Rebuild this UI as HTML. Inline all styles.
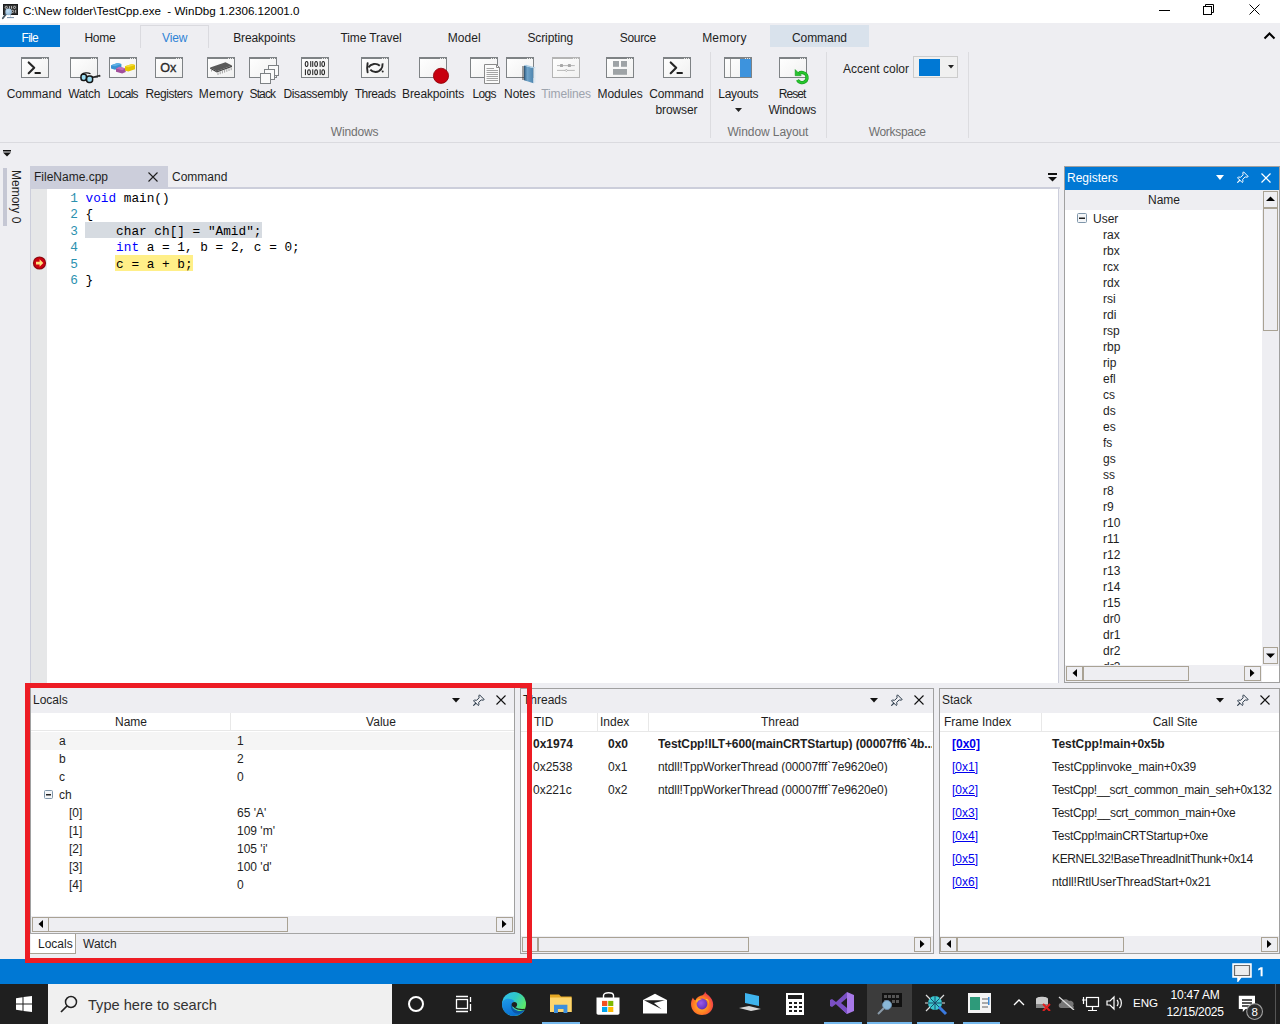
<!DOCTYPE html>
<html><head><meta charset="utf-8">
<style>
*{box-sizing:border-box;margin:0;padding:0}
html,body{width:1280px;height:1024px;overflow:hidden}
body{position:relative;background:#EEEEF2;font-family:"Liberation Sans",sans-serif;font-size:12px;color:#1E1E1E}
.a{position:absolute}
.t{position:absolute;white-space:nowrap;line-height:1}
.m{font-family:"Liberation Mono",monospace}
</style></head><body>
<div class="a" style="left:0px;top:0px;width:1280px;height:23px;background:#fff"></div>
<svg class="a" style="left:0px;top:0px;" width="22" height="20" viewBox="0 0 22 20"><defs><radialGradient id="lg" cx="0.4" cy="0.35" r="0.7"><stop offset="0" stop-color="#C4E2F8"/><stop offset="1" stop-color="#8FB3CF"/></radialGradient></defs><rect x="3" y="4" width="15" height="11" fill="#1C1C1C"/><rect x="4" y="5" width="13" height="9" fill="#333"/><circle cx="6.3" cy="7.4" r="1.1" fill="none" stroke="#C8C8C8" stroke-width="0.9"/><rect x="9" y="6.1" width="0.9" height="2.6" fill="#C8C8C8"/><rect x="11" y="6.1" width="0.9" height="2.6" fill="#C8C8C8"/><circle cx="14.5" cy="7.4" r="1.1" fill="none" stroke="#C8C8C8" stroke-width="0.9"/><circle cx="12.6" cy="11.4" r="1.1" fill="none" stroke="#C8C8C8" stroke-width="0.9"/><rect x="15.2" y="10" width="0.9" height="2.8" fill="#C8C8C8"/><path d="M5.6 14.6L2.8 18.3" stroke="#4A5A66" stroke-width="1.8" stroke-linecap="round"/><circle cx="8.6" cy="11.9" r="3.3" fill="url(#lg)"/><path d="M10.5 14.8V16.8" stroke="#B8C8D8" stroke-width="0.8"/><rect x="7" y="17" width="7" height="1.1" fill="#7F95AD"/></svg>
<div class="t" style="left:23px;top:5px;font-size:11.6px;color:#000">C:\New folder\TestCpp.exe&nbsp; - WinDbg 1.2306.12001.0</div>
<div class="a" style="left:1159px;top:10px;width:11px;height:1px;background:#000"></div>
<svg class="a" style="left:1203px;top:4px;" width="12" height="12" viewBox="0 0 12 12"><rect x="0.5" y="2.5" width="8" height="8" fill="none" stroke="#000"/><path d="M2.5 2.5V0.5H10.5V8.5H8.5" fill="none" stroke="#000"/></svg>
<svg class="a" style="left:1249px;top:4px;" width="12" height="12" viewBox="0 0 12 12"><path d="M0.5 0.5L10.5 10.5M10.5 0.5L0.5 10.5" stroke="#000" stroke-width="1"/></svg>
<div class="a" style="left:0px;top:25px;width:60px;height:22px;background:#0078D4"></div>
<div class="a" style="left:140px;top:25px;width:69px;height:23px;background:#EEEEF2;border:1px solid #DADADF;border-bottom:none"></div>
<div class="a" style="left:770px;top:25px;width:99px;height:22px;background:#D9E2EC"></div>
<div class="t" style="left:-70.25px;top:32px;width:200px;text-align:center;color:#FFFFFF;font-size:12px;letter-spacing:-0.750px;">File</div>
<div class="t" style="left:-0.13px;top:32px;width:200px;text-align:center;color:#1E1E1E;font-size:12px;letter-spacing:-0.267px;">Home</div>
<div class="t" style="left:74.63px;top:32px;width:200px;text-align:center;color:#2F83D6;font-size:12px;letter-spacing:-0.133px;">View</div>
<div class="t" style="left:164.30px;top:32px;width:200px;text-align:center;color:#1E1E1E;font-size:12px;letter-spacing:-0.110px;">Breakpoints</div>
<div class="t" style="left:271.00px;top:32px;width:200px;text-align:center;color:#1E1E1E;font-size:12px;letter-spacing:-0.110px;">Time Travel</div>
<div class="t" style="left:364.26px;top:32px;width:200px;text-align:center;color:#1E1E1E;font-size:12px;letter-spacing:0.025px;">Model</div>
<div class="t" style="left:450.29px;top:32px;width:200px;text-align:center;color:#1E1E1E;font-size:12px;letter-spacing:-0.112px;">Scripting</div>
<div class="t" style="left:537.84px;top:32px;width:200px;text-align:center;color:#1E1E1E;font-size:12px;letter-spacing:-0.320px;">Source</div>
<div class="t" style="left:624.46px;top:32px;width:200px;text-align:center;color:#1E1E1E;font-size:12px;letter-spacing:0.220px;">Memory</div>
<div class="t" style="left:719.43px;top:32px;width:200px;text-align:center;color:#1E1E1E;font-size:12px;letter-spacing:-0.050px;">Command</div>
<svg class="a" style="left:1263px;top:31px;" width="13" height="9" viewBox="0 0 13 9"><path d="M1.5 7.5L6.5 2.5L11.5 7.5" fill="none" stroke="#000" stroke-width="2"/></svg>
<svg width="0" height="0" style="position:absolute"><defs><linearGradient id="wg" x1="0" y1="0" x2="1" y2="1"><stop offset="0" stop-color="#FFFFFF"/><stop offset="1" stop-color="#F0F0F0"/></linearGradient><linearGradient id="nb" x1="0" y1="0" x2="1" y2="0"><stop offset="0" stop-color="#2F5F86"/><stop offset="0.35" stop-color="#6FA3C9"/><stop offset="1" stop-color="#4D84AE"/></linearGradient></defs></svg>
<svg class="a" style="left:21px;top:57px;" width="28" height="21" viewBox="0 0 28 21"><rect x="0.5" y="0.5" width="27" height="20" fill="url(#wg)" stroke="#7E8285"/><rect x="0" y="0" width="28" height="2" fill="#7E8285"/><rect x="21" y="1" width="1" height="1" fill="#E8E8E8"/><rect x="23" y="1" width="1" height="1" fill="#E8E8E8"/><rect x="25" y="1" width="1" height="1" fill="#E8E8E8"/><path d="M7.7 5.4L13.2 10.8L7.7 16.2" fill="none" stroke="#262626" stroke-width="2.1" stroke-linecap="round" stroke-linejoin="round"/><rect x="13.6" y="15" width="6.2" height="2" rx="0.6" fill="#1E1E1E"/></svg>
<svg class="a" style="left:70px;top:57px;" width="32" height="28" viewBox="0 0 32 28"><rect x="0.5" y="0.5" width="27" height="20" fill="url(#wg)" stroke="#7E8285"/><rect x="0" y="0" width="28" height="2" fill="#7E8285"/><rect x="21" y="1" width="1" height="1" fill="#E8E8E8"/><rect x="23" y="1" width="1" height="1" fill="#E8E8E8"/><rect x="25" y="1" width="1" height="1" fill="#E8E8E8"/><path d="M11.5 17.6C13.5 15.6 18 15.4 20.5 16.8" fill="none" stroke="#1A1A1A" stroke-width="1.3"/><path d="M22 20.5L29.5 18.6L30 19.6" fill="none" stroke="#2A2A2A" stroke-width="1.6"/><rect x="11" y="17.2" width="5.4" height="6.2" rx="2.2" fill="#9ADCF2" stroke="#151515" stroke-width="1.5"/><rect x="16.6" y="19" width="6" height="6.4" rx="2.4" fill="#9ADCF2" stroke="#151515" stroke-width="1.5"/></svg>
<svg class="a" style="left:109px;top:57px;" width="28" height="21" viewBox="0 0 28 21"><rect x="0.5" y="0.5" width="27" height="20" fill="url(#wg)" stroke="#7E8285"/><rect x="0" y="0" width="28" height="2" fill="#7E8285"/><rect x="21" y="1" width="1" height="1" fill="#E8E8E8"/><rect x="23" y="1" width="1" height="1" fill="#E8E8E8"/><rect x="25" y="1" width="1" height="1" fill="#E8E8E8"/><path d="M2 8.2L8.5 6L12.4 7V10.6L6 12.7L2 11.5Z" fill="#3A92D2"/><path d="M2 8.2L8.5 6L12.4 7L6 9.2Z" fill="#5DB0E6"/><path d="M7 11.6L10.5 9.8L16.7 11.4V14.9L13.2 16.6L7 14.8Z" fill="#A14E9C"/><path d="M7 11.6L10.5 9.8L16.7 11.4L13.2 13.2Z" fill="#C070BA"/><path d="M16 9.3L23 7L26 8V12.3L19.3 14.5L16 13.5Z" fill="#E4C400"/><path d="M16 9.3L23 7L26 8L19.3 10.3Z" fill="#F3DC3A"/></svg>
<svg class="a" style="left:155px;top:57px;" width="28" height="21" viewBox="0 0 28 21"><rect x="0.5" y="0.5" width="27" height="20" fill="url(#wg)" stroke="#7E8285"/><rect x="0" y="0" width="28" height="2" fill="#7E8285"/><rect x="21" y="1" width="1" height="1" fill="#E8E8E8"/><rect x="23" y="1" width="1" height="1" fill="#E8E8E8"/><rect x="25" y="1" width="1" height="1" fill="#E8E8E8"/><text x="5.3" y="15.2" font-size="12.6" font-family="Liberation Sans" fill="#2A2A2A" stroke="#2A2A2A" stroke-width="0.35">Ox</text></svg>
<svg class="a" style="left:207px;top:57px;" width="28" height="21" viewBox="0 0 28 21"><rect x="0.5" y="0.5" width="27" height="20" fill="url(#wg)" stroke="#7E8285"/><rect x="0" y="0" width="28" height="2" fill="#7E8285"/><rect x="21" y="1" width="1" height="1" fill="#E8E8E8"/><rect x="23" y="1" width="1" height="1" fill="#E8E8E8"/><rect x="25" y="1" width="1" height="1" fill="#E8E8E8"/><path d="M3.2 10.5L18.5 5.3L25 8.6L9.8 14.2Z" fill="#5A5A5A"/><path d="M3.2 10.5L9.8 14.2L9.8 15.4L3.2 11.8Z" fill="#3A3A3A"/><path d="M9.8 14.2L25 8.6L25 9.9L9.8 15.4Z" fill="#484848"/><path d="M4.5 12.2V14.5M11 15.4V18M13.2 14.6V17.2M15.4 13.8V16.4M17.6 13V15.6M19.8 12.2V14.8M22 11.4V14M24.2 10.6V13.2" stroke="#9A9A9A" stroke-width="0.9"/></svg>
<svg class="a" style="left:249px;top:57px;" width="32" height="30" viewBox="0 0 32 30"><rect x="0.5" y="0.5" width="27" height="20" fill="url(#wg)" stroke="#7E8285"/><rect x="0" y="0" width="28" height="2" fill="#7E8285"/><rect x="21" y="1" width="1" height="1" fill="#E8E8E8"/><rect x="23" y="1" width="1" height="1" fill="#E8E8E8"/><rect x="25" y="1" width="1" height="1" fill="#E8E8E8"/><rect x="19.5" y="8.5" width="10" height="10" fill="#FAFAFA" stroke="#7E8285"/><rect x="15.5" y="12.5" width="10" height="10" fill="#FAFAFA" stroke="#7E8285"/><rect x="11.5" y="16.5" width="10" height="10" fill="#FAFAFA" stroke="#7E8285"/></svg>
<svg class="a" style="left:301px;top:57px;" width="28" height="21" viewBox="0 0 28 21"><rect x="0.5" y="0.5" width="27" height="20" fill="url(#wg)" stroke="#7E8285"/><rect x="0" y="0" width="28" height="2" fill="#7E8285"/><rect x="21" y="1" width="1" height="1" fill="#E8E8E8"/><rect x="23" y="1" width="1" height="1" fill="#E8E8E8"/><rect x="25" y="1" width="1" height="1" fill="#E8E8E8"/><ellipse cx="5.6" cy="7" rx="1.35" ry="2.45" fill="none" stroke="#262626" stroke-width="1.05"/><rect x="9.2" y="4.1" width="1.05" height="5.8" fill="#262626"/><rect x="11.2" y="4.1" width="1.05" height="5.8" fill="#262626"/><ellipse cx="15.1" cy="7" rx="1.35" ry="2.45" fill="none" stroke="#262626" stroke-width="1.05"/><rect x="18.6" y="4.1" width="1.05" height="5.8" fill="#262626"/><ellipse cx="22.2" cy="7" rx="1.35" ry="2.45" fill="none" stroke="#262626" stroke-width="1.05"/><rect x="3.9" y="12.299999999999999" width="1.05" height="5.8" fill="#262626"/><ellipse cx="8.0" cy="15.2" rx="1.35" ry="2.45" fill="none" stroke="#262626" stroke-width="1.05"/><rect x="11.2" y="12.299999999999999" width="1.05" height="5.8" fill="#262626"/><ellipse cx="15.1" cy="15.2" rx="1.35" ry="2.45" fill="none" stroke="#262626" stroke-width="1.05"/><rect x="18.6" y="12.299999999999999" width="1.05" height="5.8" fill="#262626"/><ellipse cx="22.2" cy="15.2" rx="1.35" ry="2.45" fill="none" stroke="#262626" stroke-width="1.05"/></svg>
<svg class="a" style="left:361px;top:57px;" width="28" height="21" viewBox="0 0 28 21"><rect x="0.5" y="0.5" width="27" height="20" fill="url(#wg)" stroke="#7E8285"/><rect x="0" y="0" width="28" height="2" fill="#7E8285"/><rect x="21" y="1" width="1" height="1" fill="#E8E8E8"/><rect x="23" y="1" width="1" height="1" fill="#E8E8E8"/><rect x="25" y="1" width="1" height="1" fill="#E8E8E8"/><path d="M6.6 6.3C6 9.5 6 12.5 6.6 15.4" fill="none" stroke="#2A2A2A" stroke-width="1.9" stroke-linecap="round"/><path d="M7.4 10.4C10 6.5 15.5 5.6 18.8 8.8" fill="none" stroke="#2A2A2A" stroke-width="1.9"/><path d="M9.3 12.6C12 15.8 17.5 16 20 12" fill="none" stroke="#2A2A2A" stroke-width="1.9"/><path d="M21.6 6.3C21.8 8.8 21 11.2 19.6 13" fill="none" stroke="#2A2A2A" stroke-width="1.9"/><circle cx="21.7" cy="14.4" r="1" fill="#2A2A2A"/></svg>
<svg class="a" style="left:419px;top:57px;" width="32" height="30" viewBox="0 0 32 30"><rect x="0.5" y="0.5" width="27" height="20" fill="url(#wg)" stroke="#7E8285"/><rect x="0" y="0" width="28" height="2" fill="#7E8285"/><rect x="21" y="1" width="1" height="1" fill="#E8E8E8"/><rect x="23" y="1" width="1" height="1" fill="#E8E8E8"/><rect x="25" y="1" width="1" height="1" fill="#E8E8E8"/><circle cx="22" cy="18.8" r="7.6" fill="#C8000F" stroke="#8A0008" stroke-width="0.8"/></svg>
<svg class="a" style="left:470px;top:57px;" width="32" height="30" viewBox="0 0 32 30"><rect x="0.5" y="0.5" width="27" height="20" fill="url(#wg)" stroke="#7E8285"/><rect x="0" y="0" width="28" height="2" fill="#7E8285"/><rect x="21" y="1" width="1" height="1" fill="#E8E8E8"/><rect x="23" y="1" width="1" height="1" fill="#E8E8E8"/><rect x="25" y="1" width="1" height="1" fill="#E8E8E8"/><path d="M14.5 7.5H26.5L29.5 10.5V26.5H14.5Z" fill="#FAFAFA" stroke="#8A8A8A"/><path d="M26.5 7.5V10.5H29.5" fill="none" stroke="#8A8A8A"/><path d="M16.5 11.5H24M16.5 13.5H28M16.5 15.5H28M16.5 17.5H28M16.5 19.5H28M16.5 21.5H28M16.5 23.5H28" stroke="#9A9A9A" stroke-width="0.9"/></svg>
<svg class="a" style="left:506px;top:57px;" width="32" height="30" viewBox="0 0 32 30"><rect x="0.5" y="0.5" width="27" height="20" fill="url(#wg)" stroke="#7E8285"/><rect x="0" y="0" width="28" height="2" fill="#7E8285"/><rect x="21" y="1" width="1" height="1" fill="#E8E8E8"/><rect x="23" y="1" width="1" height="1" fill="#E8E8E8"/><rect x="25" y="1" width="1" height="1" fill="#E8E8E8"/><path d="M18 8.5L27.5 11.2V26.2L18 23.3Z" fill="url(#nb)"/><path d="M18 8.5L20 7.7L29.5 10.4L27.5 11.2Z" fill="#A9CBE3"/><path d="M27.5 11.2L29.5 10.4V25.4L27.5 26.2Z" fill="#DDE8F0"/><path d="M16 10H18.5M16 12H18.5M16 14H18.5M16 16H18.5M16 18H18.5M16 20H18.5M16 22H18.5" stroke="#333" stroke-width="0.9"/></svg>
<svg class="a" style="left:552px;top:57px;" width="28" height="21" viewBox="0 0 28 21"><rect x="0.5" y="0.5" width="27" height="20" fill="url(#wg)" stroke="#B4B4B4"/><rect x="0" y="0" width="28" height="2" fill="#B4B4B4"/><rect x="21" y="1" width="1" height="1" fill="#E8E8E8"/><rect x="23" y="1" width="1" height="1" fill="#E8E8E8"/><rect x="25" y="1" width="1" height="1" fill="#E8E8E8"/><path d="M5 8.6H22.8M5 13.4H22.8" stroke="#B8B8B8" stroke-width="1"/><rect x="8" y="7.1" width="3" height="3" rx="0.6" fill="#A8A8A8"/><rect x="15.9" y="7.1" width="3" height="3" rx="0.6" fill="#A8A8A8"/><path d="M14.3 12.2L15.5 13.4L14.3 14.6L13.1 13.4Z" fill="#F4F4F4" stroke="#A8A8A8" stroke-width="0.8"/></svg>
<svg class="a" style="left:606px;top:57px;" width="28" height="21" viewBox="0 0 28 21"><rect x="0.5" y="0.5" width="27" height="20" fill="url(#wg)" stroke="#7E8285"/><rect x="0" y="0" width="28" height="2" fill="#7E8285"/><rect x="21" y="1" width="1" height="1" fill="#E8E8E8"/><rect x="23" y="1" width="1" height="1" fill="#E8E8E8"/><rect x="25" y="1" width="1" height="1" fill="#E8E8E8"/><rect x="7" y="4" width="6" height="5.8" fill="#9EA3A6"/><rect x="15" y="4" width="6" height="5.8" fill="#9EA3A6"/><rect x="7" y="12" width="14" height="5.8" fill="#9EA3A6"/></svg>
<svg class="a" style="left:663px;top:57px;" width="28" height="21" viewBox="0 0 28 21"><rect x="0.5" y="0.5" width="27" height="20" fill="url(#wg)" stroke="#7E8285"/><rect x="0" y="0" width="28" height="2" fill="#7E8285"/><rect x="21" y="1" width="1" height="1" fill="#E8E8E8"/><rect x="23" y="1" width="1" height="1" fill="#E8E8E8"/><rect x="25" y="1" width="1" height="1" fill="#E8E8E8"/><path d="M7.7 5.4L13.2 10.8L7.7 16.2" fill="none" stroke="#262626" stroke-width="2.1" stroke-linecap="round" stroke-linejoin="round"/><rect x="13.6" y="15" width="6.2" height="2" rx="0.6" fill="#1E1E1E"/></svg>
<svg class="a" style="left:724px;top:57px;" width="28" height="21" viewBox="0 0 28 21"><rect x="0.5" y="0.5" width="27" height="20" fill="url(#wg)" stroke="#7E8285"/><rect x="0" y="0" width="28" height="2" fill="#7E8285"/><rect x="21" y="1" width="1" height="1" fill="#E8E8E8"/><rect x="23" y="1" width="1" height="1" fill="#E8E8E8"/><rect x="25" y="1" width="1" height="1" fill="#E8E8E8"/><rect x="6" y="2" width="1" height="18" fill="#A0A0A0"/><rect x="16" y="2" width="11" height="18" fill="#3D93DD"/></svg>
<svg class="a" style="left:779px;top:57px;" width="32" height="30" viewBox="0 0 32 30"><rect x="0.5" y="0.5" width="27" height="20" fill="url(#wg)" stroke="#7E8285"/><rect x="0" y="0" width="28" height="2" fill="#7E8285"/><rect x="21" y="1" width="1" height="1" fill="#E8E8E8"/><rect x="23" y="1" width="1" height="1" fill="#E8E8E8"/><rect x="25" y="1" width="1" height="1" fill="#E8E8E8"/><path d="M18.5 23A5.1 5.1 0 1 0 19.8 16.6" fill="none" stroke="#129A1A" stroke-width="3.3"/><path d="M18.5 23A5.1 5.1 0 1 0 19.8 16.6" fill="none" stroke="#27C42E" stroke-width="2.2"/><path d="M16.2 12.6V18.7H22.2Z" fill="#27C42E" stroke="#129A1A" stroke-width="0.6"/></svg>
<div class="t" style="left:-65.83px;top:88px;width:200px;text-align:center;color:#1E1E1E;font-size:12px;letter-spacing:-0.067px;">Command</div>
<div class="t" style="left:-15.88px;top:88px;width:200px;text-align:center;color:#1E1E1E;font-size:12px;letter-spacing:-0.350px;">Watch</div>
<div class="t" style="left:22.75px;top:88px;width:200px;text-align:center;color:#1E1E1E;font-size:12px;letter-spacing:-0.750px;">Locals</div>
<div class="t" style="left:68.83px;top:88px;width:200px;text-align:center;color:#1E1E1E;font-size:12px;letter-spacing:-0.438px;">Registers</div>
<div class="t" style="left:121.10px;top:88px;width:200px;text-align:center;color:#1E1E1E;font-size:12px;letter-spacing:0.200px;">Memory</div>
<div class="t" style="left:162.38px;top:88px;width:200px;text-align:center;color:#1E1E1E;font-size:12px;letter-spacing:-0.850px;">Stack</div>
<div class="t" style="left:215.42px;top:88px;width:200px;text-align:center;color:#1E1E1E;font-size:12px;letter-spacing:-0.360px;">Disassembly</div>
<div class="t" style="left:275.12px;top:88px;width:200px;text-align:center;color:#1E1E1E;font-size:12px;letter-spacing:-0.450px;">Threads</div>
<div class="t" style="left:333.08px;top:88px;width:200px;text-align:center;color:#1E1E1E;font-size:12px;letter-spacing:-0.130px;">Breakpoints</div>
<div class="t" style="left:384.13px;top:88px;width:200px;text-align:center;color:#1E1E1E;font-size:12px;letter-spacing:-0.733px;">Logs</div>
<div class="t" style="left:419.58px;top:88px;width:200px;text-align:center;color:#1E1E1E;font-size:12px;letter-spacing:-0.050px;">Notes</div>
<div class="t" style="left:466.07px;top:88px;width:200px;text-align:center;color:#9DA3AD;font-size:12px;letter-spacing:-0.162px;">Timelines</div>
<div class="t" style="left:520.04px;top:88px;width:200px;text-align:center;color:#1E1E1E;font-size:12px;letter-spacing:-0.017px;">Modules</div>
<div class="t" style="left:576.36px;top:88px;width:200px;text-align:center;color:#1E1E1E;font-size:12px;letter-spacing:-0.183px;">Command</div>
<div class="t" style="left:576.43px;top:104px;width:200px;text-align:center;color:#1E1E1E;font-size:12px;letter-spacing:-0.133px;">browser</div>
<div class="t" style="left:638.25px;top:88px;width:200px;text-align:center;color:#1E1E1E;font-size:12px;letter-spacing:-0.300px;">Layouts</div>
<div class="t" style="left:692.02px;top:88px;width:200px;text-align:center;color:#1E1E1E;font-size:12px;letter-spacing:-0.950px;">Reset</div>
<div class="t" style="left:692.22px;top:104px;width:200px;text-align:center;color:#1E1E1E;font-size:12px;letter-spacing:-0.167px;">Windows</div>
<svg class="a" style="left:735px;top:108px;" width="7" height="4" viewBox="0 0 7 4"><path d="M0 0H7L3.5 4Z" fill="#222"/></svg>
<div class="t" style="left:254.60px;top:126px;width:200px;text-align:center;color:#707070;font-size:12px;letter-spacing:-0.142px;">Windows</div>
<div class="t" style="left:667.86px;top:126px;width:200px;text-align:center;color:#707070;font-size:12px;letter-spacing:-0.083px;">Window Layout</div>
<div class="t" style="left:797.19px;top:126px;width:200px;text-align:center;color:#707070;font-size:12px;letter-spacing:-0.312px;">Workspace</div>
<div class="a" style="left:710px;top:52px;width:1px;height:86px;background:#DCDCE0"></div>
<div class="a" style="left:826px;top:52px;width:1px;height:86px;background:#DCDCE0"></div>
<div class="a" style="left:968px;top:52px;width:1px;height:86px;background:#DCDCE0"></div>
<div class="t" style="left:843px;top:63px;color:#1E1E1E">Accent color</div>
<div class="a" style="left:913px;top:56px;width:45px;height:22px;background:#F0F0F0;border:1px solid #CCC"></div>
<div class="a" style="left:919px;top:59px;width:21px;height:17px;background:#0078D4"></div>
<svg class="a" style="left:948px;top:65px;" width="6" height="4" viewBox="0 0 6 4"><path d="M0 0H6L3 3.5Z" fill="#222"/></svg>
<div class="a" style="left:0px;top:142px;width:1280px;height:1px;background:#DADADF"></div>
<svg class="a" style="left:3px;top:150px;" width="8" height="7" viewBox="0 0 8 7"><rect x="0" y="0" width="8" height="1.5" fill="#111"/><path d="M0 2.5H8L4 6.5Z" fill="#111"/></svg>
<div class="a" style="left:3px;top:168px;width:4px;height:58px;background:#C5C7D4"></div>
<div class="t" style="left:22px;top:170px;transform-origin:0 0;transform:rotate(90deg);color:#1E1E1E">Memory 0</div>
<div class="a" style="left:30px;top:166px;width:138px;height:21px;background:#CCCEDB"></div>
<div class="t" style="left:34px;top:171px;color:#1E1E1E">FileName.cpp</div>
<svg class="a" style="left:148px;top:172px;" width="10" height="10" viewBox="0 0 10 10"><path d="M0.5 0.5L9.5 9.5M9.5 0.5L0.5 9.5" stroke="#1E1E1E" stroke-width="1.1"/></svg>
<div class="t" style="left:172px;top:171px;color:#1E1E1E">Command</div>
<div class="a" style="left:30px;top:187px;width:1030px;height:2px;background:#CCCEDB"></div>
<svg class="a" style="left:1048px;top:173px;" width="9" height="9" viewBox="0 0 9 9"><rect x="0" y="0" width="9" height="2" fill="#111"/><path d="M0 4H9L4.5 8.5Z" fill="#111"/></svg>
<div class="a" style="left:30px;top:189px;width:1029px;height:494px;background:#fff;border-left:1px solid #CCCEDB;border-right:1px solid #CCCEDB"></div>
<div class="a" style="left:31px;top:189px;width:16px;height:494px;background:#E6E7E8"></div>
<div class="a" style="left:85px;top:222px;width:177px;height:16px;background:#D6DBE1"></div>
<div class="a" style="left:115px;top:255px;width:78px;height:16px;background:#FFEF88"></div>
<svg class="a" style="left:32px;top:256px;" width="15" height="15" viewBox="0 0 15 15"><circle cx="7.5" cy="7" r="6.6" fill="#8C0A0E"/><circle cx="7.5" cy="7" r="5.4" fill="#CC0010"/><path d="M4 5.7H7.6V3.2L11.3 7L7.6 10.8V8.4H4Z" fill="#FFE27A"/></svg>
<div class="t m" style="left:57px;top:192.5px;width:21px;text-align:right;font-size:12.75px;color:#2B91AF">1</div>
<div class="t m" style="left:85.5px;top:192.5px;font-size:12.75px;color:#000;white-space:pre"><span style="color:#0000FF">void</span> main()</div>
<div class="t m" style="left:57px;top:209.0px;width:21px;text-align:right;font-size:12.75px;color:#2B91AF">2</div>
<div class="t m" style="left:85.5px;top:209.0px;font-size:12.75px;color:#000;white-space:pre">{</div>
<div class="t m" style="left:57px;top:225.5px;width:21px;text-align:right;font-size:12.75px;color:#2B91AF">3</div>
<div class="t m" style="left:85.5px;top:225.5px;font-size:12.75px;color:#000;white-space:pre">    char ch[] = "Amid";</div>
<div class="t m" style="left:57px;top:242.0px;width:21px;text-align:right;font-size:12.75px;color:#2B91AF">4</div>
<div class="t m" style="left:85.5px;top:242.0px;font-size:12.75px;color:#000;white-space:pre">    <span style="color:#0000FF">int</span> a = 1, b = 2, c = 0;</div>
<div class="t m" style="left:57px;top:258.5px;width:21px;text-align:right;font-size:12.75px;color:#2B91AF">5</div>
<div class="t m" style="left:85.5px;top:258.5px;font-size:12.75px;color:#000;white-space:pre">    c = a + b;</div>
<div class="t m" style="left:57px;top:275.0px;width:21px;text-align:right;font-size:12.75px;color:#2B91AF">6</div>
<div class="t m" style="left:85.5px;top:275.0px;font-size:12.75px;color:#000;white-space:pre">}</div>
<div class="a" style="left:1064px;top:166px;width:216px;height:517px;background:#fff;border:1px solid #A0A0A0"></div>
<div class="a" style="left:1065px;top:167px;width:214px;height:23px;background:#0078D4"></div>
<div class="t" style="left:1067px;top:172px;color:#fff">Registers</div>
<svg class="a" style="left:1216px;top:175px;" width="8" height="5" viewBox="0 0 8 5"><path d="M0 0H8L4 5Z" fill="#fff"/></svg>
<svg class="a" style="left:1237px;top:171px;" width="12" height="12" viewBox="0 0 12 12"><path d="M6.5 0.8L11.2 5.5L10 6.2L8.2 5.9L5.7 8.4L6 10.8L5.2 11.5L0.5 6.8L1.3 6L3.6 6.3L6.1 3.8L5.8 2Z" fill="none" stroke="#fff" stroke-width="1"/><path d="M3 9L0.3 11.7" stroke="#fff" stroke-width="1.1"/></svg>
<svg class="a" style="left:1261px;top:173px;" width="10" height="10" viewBox="0 0 10 10"><path d="M0.5 0.5L9.5 9.5M9.5 0.5L0.5 9.5" stroke="#fff" stroke-width="1.2"/></svg>
<div class="a" style="left:1065px;top:190px;width:197px;height:20px;background:#EEEEF2"></div>
<div class="t" style="left:1114px;top:194px;width:100px;text-align:center;color:#1E1E1E">Name</div>
<div class="a" style="left:1262px;top:190px;width:17px;height:476px;background:#EEEEF2"></div>
<div class="a" style="left:1263px;top:191px;width:15px;height:17px;background:#EEEEF2;border:1px solid #A9A294"></div>
<svg class="a" style="left:1266px;top:196px;" width="9" height="6" viewBox="0 0 9 6"><path d="M0 5H9L4.5 0.5Z" fill="#000"/></svg>
<div class="a" style="left:1263px;top:208px;width:15px;height:123px;background:#EEEEF2;border:1px solid #A9A294"></div>
<div class="a" style="left:1263px;top:647px;width:15px;height:17px;background:#EEEEF2;border:1px solid #A9A294"></div>
<svg class="a" style="left:1266px;top:653px;" width="9" height="6" viewBox="0 0 9 6"><path d="M0 0.5H9L4.5 5Z" fill="#000"/></svg>
<div class="a" style="left:1065px;top:665px;width:197px;height:17px;background:#EEEEF2"></div>
<div class="a" style="left:1066px;top:666px;width:17px;height:15px;background:#EEEEF2;border:1px solid #A9A294"></div>
<svg class="a" style="left:1072px;top:669px;" width="5" height="8" viewBox="0 0 5 8"><path d="M5 0V8L0.5 4Z" fill="#000"/></svg>
<div class="a" style="left:1083px;top:666px;width:106px;height:15px;background:#EEEEF2;border:1px solid #A9A294"></div>
<div class="a" style="left:1244px;top:666px;width:17px;height:15px;background:#EEEEF2;border:1px solid #A9A294"></div>
<svg class="a" style="left:1250px;top:669px;" width="5" height="8" viewBox="0 0 5 8"><path d="M0 0V8L4.5 4Z" fill="#000"/></svg>
<svg class="a" style="left:1077px;top:213px;" width="10" height="10" viewBox="0 0 10 10"><rect x="0.5" y="0.5" width="9" height="9" rx="1" fill="#F4F6F8" stroke="#7F96AA"/><rect x="2" y="4.5" width="6" height="1.5" fill="#222"/></svg>
<div class="t" style="left:1093px;top:213px;">User</div>
<div class="a" style="left:1065px;top:210px;width:197px;height:455px;overflow:hidden">
<div class="t" style="left:38px;top:19px">rax</div>
<div class="t" style="left:38px;top:35px">rbx</div>
<div class="t" style="left:38px;top:51px">rcx</div>
<div class="t" style="left:38px;top:67px">rdx</div>
<div class="t" style="left:38px;top:83px">rsi</div>
<div class="t" style="left:38px;top:99px">rdi</div>
<div class="t" style="left:38px;top:115px">rsp</div>
<div class="t" style="left:38px;top:131px">rbp</div>
<div class="t" style="left:38px;top:147px">rip</div>
<div class="t" style="left:38px;top:163px">efl</div>
<div class="t" style="left:38px;top:179px">cs</div>
<div class="t" style="left:38px;top:195px">ds</div>
<div class="t" style="left:38px;top:211px">es</div>
<div class="t" style="left:38px;top:227px">fs</div>
<div class="t" style="left:38px;top:243px">gs</div>
<div class="t" style="left:38px;top:259px">ss</div>
<div class="t" style="left:38px;top:275px">r8</div>
<div class="t" style="left:38px;top:291px">r9</div>
<div class="t" style="left:38px;top:307px">r10</div>
<div class="t" style="left:38px;top:323px">r11</div>
<div class="t" style="left:38px;top:339px">r12</div>
<div class="t" style="left:38px;top:355px">r13</div>
<div class="t" style="left:38px;top:371px">r14</div>
<div class="t" style="left:38px;top:387px">r15</div>
<div class="t" style="left:38px;top:403px">dr0</div>
<div class="t" style="left:38px;top:419px">dr1</div>
<div class="t" style="left:38px;top:435px">dr2</div>
<div class="t" style="left:38px;top:451px">dr3</div>
</div>
<div class="a" style="left:30px;top:688px;width:485px;height:246px;background:#fff;border-right:1px solid #CCCEDB"></div>
<div class="a" style="left:30px;top:688px;width:485px;height:25px;background:#EEEEF2"></div>
<div class="t" style="left:33px;top:694px;">Locals</div>
<svg class="a" style="left:452px;top:698px;" width="8" height="5" viewBox="0 0 8 5"><path d="M0 0H8L4 4.5Z" fill="#111"/></svg>
<svg class="a" style="left:473px;top:694px;" width="12" height="12" viewBox="0 0 12 12"><path d="M6.5 0.8L11.2 5.5L10 6.2L8.2 5.9L5.7 8.4L6 10.8L5.2 11.5L0.5 6.8L1.3 6L3.6 6.3L6.1 3.8L5.8 2Z" fill="none" stroke="#2B3A4A" stroke-width="1"/><path d="M3 9L0.3 11.7" stroke="#2B3A4A" stroke-width="1.1"/></svg>
<svg class="a" style="left:496px;top:695px;" width="10" height="10" viewBox="0 0 10 10"><path d="M0.5 0.5L9.5 9.5M9.5 0.5L0.5 9.5" stroke="#111" stroke-width="1.1"/></svg>
<div class="a" style="left:31px;top:713px;width:484px;height:18px;background:#fff;border-bottom:1px solid #E8E8E8"></div>
<div class="a" style="left:230px;top:713px;width:1px;height:18px;background:#E8E8E8"></div>
<div class="t" style="left:81px;top:716px;width:100px;text-align:center">Name</div>
<div class="t" style="left:331px;top:716px;width:100px;text-align:center">Value</div>
<div class="a" style="left:31px;top:732px;width:483px;height:18px;background:#F5F5F5"></div>
<div class="t" style="left:59px;top:735px;">a</div>
<div class="t" style="left:237px;top:735px;">1</div>
<div class="t" style="left:59px;top:753px;">b</div>
<div class="t" style="left:237px;top:753px;">2</div>
<div class="t" style="left:59px;top:771px;">c</div>
<div class="t" style="left:237px;top:771px;">0</div>
<div class="t" style="left:59px;top:789px;">ch</div>
<div class="t" style="left:69px;top:807px;">[0]</div>
<div class="t" style="left:237px;top:807px;">65 'A'</div>
<div class="t" style="left:69px;top:825px;">[1]</div>
<div class="t" style="left:237px;top:825px;">109 'm'</div>
<div class="t" style="left:69px;top:843px;">[2]</div>
<div class="t" style="left:237px;top:843px;">105 'i'</div>
<div class="t" style="left:69px;top:861px;">[3]</div>
<div class="t" style="left:237px;top:861px;">100 'd'</div>
<div class="t" style="left:69px;top:879px;">[4]</div>
<div class="t" style="left:237px;top:879px;">0</div>
<svg class="a" style="left:44px;top:790px;" width="9" height="9" viewBox="0 0 9 9"><rect x="0.5" y="0.5" width="8" height="8" rx="1" fill="#F4F6F8" stroke="#7F96AA"/><rect x="2" y="4" width="5" height="1.5" fill="#222"/></svg>
<div class="a" style="left:31px;top:916px;width:483px;height:17px;background:#EEEEF2"></div>
<div class="a" style="left:32px;top:917px;width:17px;height:15px;background:#EEEEF2;border:1px solid #A9A294"></div>
<svg class="a" style="left:38px;top:920px;" width="5" height="8" viewBox="0 0 5 8"><path d="M5 0V8L0.5 4Z" fill="#000"/></svg>
<div class="a" style="left:48px;top:917px;width:240px;height:15px;background:#EEEEF2;border:1px solid #A9A294"></div>
<div class="a" style="left:496px;top:917px;width:17px;height:15px;background:#EEEEF2;border:1px solid #A9A294"></div>
<svg class="a" style="left:502px;top:920px;" width="5" height="8" viewBox="0 0 5 8"><path d="M0 0V8L4.5 4Z" fill="#000"/></svg>
<div class="a" style="left:514px;top:688px;width:1px;height:246px;background:#A0A0A0"></div>
<div class="a" style="left:30px;top:688px;width:1px;height:246px;background:#A0A0A0"></div>
<div class="a" style="left:31px;top:933px;width:45px;height:21px;background:#fff;border-right:1px solid #A9A294;border-bottom:1px solid #A9A294"></div>
<div class="a" style="left:30px;top:953px;width:46px;height:1px;background:#A9A294"></div>
<div class="a" style="left:30px;top:933px;width:485px;height:1px;background:#A5A5A5"></div>
<div class="t" style="left:38px;top:938px;">Locals</div>
<div class="t" style="left:83px;top:938px;">Watch</div>
<div class="a" style="left:520px;top:688px;width:414px;height:266px;background:#fff;border:1px solid #A0A0A0"></div>
<div class="a" style="left:521px;top:689px;width:412px;height:24px;background:#EEEEF2"></div>
<div class="t" style="left:523px;top:694px;">Threads</div>
<svg class="a" style="left:870px;top:698px;" width="8" height="5" viewBox="0 0 8 5"><path d="M0 0H8L4 4.5Z" fill="#111"/></svg>
<svg class="a" style="left:891px;top:694px;" width="12" height="12" viewBox="0 0 12 12"><path d="M6.5 0.8L11.2 5.5L10 6.2L8.2 5.9L5.7 8.4L6 10.8L5.2 11.5L0.5 6.8L1.3 6L3.6 6.3L6.1 3.8L5.8 2Z" fill="none" stroke="#2B3A4A" stroke-width="1"/><path d="M3 9L0.3 11.7" stroke="#2B3A4A" stroke-width="1.1"/></svg>
<svg class="a" style="left:914px;top:695px;" width="10" height="10" viewBox="0 0 10 10"><path d="M0.5 0.5L9.5 9.5M9.5 0.5L0.5 9.5" stroke="#111" stroke-width="1.1"/></svg>
<div class="a" style="left:521px;top:713px;width:412px;height:19px;background:#fff;border-bottom:1px solid #E8E8E8"></div>
<div class="a" style="left:597px;top:713px;width:1px;height:19px;background:#E8E8E8"></div>
<div class="a" style="left:648px;top:713px;width:1px;height:19px;background:#E8E8E8"></div>
<div class="t" style="left:534px;top:716px;">TID</div>
<div class="t" style="left:600px;top:716px;">Index</div>
<div class="t" style="left:730px;top:716px;width:100px;text-align:center">Thread</div>
<div class="t" style="left:533px;top:738px;font-weight:bold">0x1974</div>
<div class="t" style="left:608px;top:738px;font-weight:bold">0x0</div>
<div class="t" style="left:658px;top:738px;width:274px;overflow:hidden;letter-spacing:-0.112px;font-weight:bold">TestCpp!ILT+600(mainCRTStartup) (00007ff6`4b...</div>
<div class="t" style="left:533px;top:761px;">0x2538</div>
<div class="t" style="left:608px;top:761px;">0x1</div>
<div class="t" style="left:658px;top:761px;width:274px;overflow:hidden;letter-spacing:-0.112px;">ntdll!TppWorkerThread (00007fff`7e9620e0)</div>
<div class="t" style="left:533px;top:784px;">0x221c</div>
<div class="t" style="left:608px;top:784px;">0x2</div>
<div class="t" style="left:658px;top:784px;width:274px;overflow:hidden;letter-spacing:-0.112px;">ntdll!TppWorkerThread (00007fff`7e9620e0)</div>
<div class="a" style="left:521px;top:936px;width:412px;height:17px;background:#EEEEF2"></div>
<div class="a" style="left:522px;top:937px;width:16px;height:15px;background:#EEEEF2;border:1px solid #A9A294"></div>
<div class="a" style="left:538px;top:937px;width:211px;height:15px;background:#EEEEF2;border:1px solid #A9A294"></div>
<div class="a" style="left:914px;top:937px;width:17px;height:15px;background:#EEEEF2;border:1px solid #A9A294"></div>
<svg class="a" style="left:920px;top:940px;" width="5" height="8" viewBox="0 0 5 8"><path d="M0 0V8L4.5 4Z" fill="#000"/></svg>
<div class="a" style="left:939px;top:688px;width:341px;height:266px;background:#fff;border:1px solid #A0A0A0"></div>
<div class="a" style="left:940px;top:689px;width:339px;height:24px;background:#EEEEF2"></div>
<div class="t" style="left:942px;top:694px;">Stack</div>
<svg class="a" style="left:1216px;top:698px;" width="8" height="5" viewBox="0 0 8 5"><path d="M0 0H8L4 4.5Z" fill="#111"/></svg>
<svg class="a" style="left:1237px;top:694px;" width="12" height="12" viewBox="0 0 12 12"><path d="M6.5 0.8L11.2 5.5L10 6.2L8.2 5.9L5.7 8.4L6 10.8L5.2 11.5L0.5 6.8L1.3 6L3.6 6.3L6.1 3.8L5.8 2Z" fill="none" stroke="#2B3A4A" stroke-width="1"/><path d="M3 9L0.3 11.7" stroke="#2B3A4A" stroke-width="1.1"/></svg>
<svg class="a" style="left:1260px;top:695px;" width="10" height="10" viewBox="0 0 10 10"><path d="M0.5 0.5L9.5 9.5M9.5 0.5L0.5 9.5" stroke="#111" stroke-width="1.1"/></svg>
<div class="a" style="left:940px;top:713px;width:339px;height:19px;background:#fff;border-bottom:1px solid #E8E8E8"></div>
<div class="a" style="left:1041px;top:713px;width:1px;height:19px;background:#E8E8E8"></div>
<div class="t" style="left:944px;top:716px;">Frame Index</div>
<div class="t" style="left:1125px;top:716px;width:100px;text-align:center">Call Site</div>
<div class="t" style="left:952px;top:738px;color:#0000EE;text-decoration:underline;font-weight:bold">[0x0]</div>
<div class="t" style="left:1052px;top:738px;font-weight:bold;letter-spacing:-0.051px">TestCpp!main+0x5b</div>
<div class="t" style="left:952px;top:761px;color:#0000EE;text-decoration:underline;">[0x1]</div>
<div class="t" style="left:1052px;top:761px;;letter-spacing:-0.156px">TestCpp!invoke_main+0x39</div>
<div class="t" style="left:952px;top:784px;color:#0000EE;text-decoration:underline;">[0x2]</div>
<div class="t" style="left:1052px;top:784px;;letter-spacing:-0.322px">TestCpp!__scrt_common_main_seh+0x132</div>
<div class="t" style="left:952px;top:807px;color:#0000EE;text-decoration:underline;">[0x3]</div>
<div class="t" style="left:1052px;top:807px;;letter-spacing:-0.278px">TestCpp!__scrt_common_main+0xe</div>
<div class="t" style="left:952px;top:830px;color:#0000EE;text-decoration:underline;">[0x4]</div>
<div class="t" style="left:1052px;top:830px;;letter-spacing:-0.263px">TestCpp!mainCRTStartup+0xe</div>
<div class="t" style="left:952px;top:853px;color:#0000EE;text-decoration:underline;">[0x5]</div>
<div class="t" style="left:1052px;top:853px;;letter-spacing:-0.355px">KERNEL32!BaseThreadInitThunk+0x14</div>
<div class="t" style="left:952px;top:876px;color:#0000EE;text-decoration:underline;">[0x6]</div>
<div class="t" style="left:1052px;top:876px;;letter-spacing:-0.101px">ntdll!RtlUserThreadStart+0x21</div>
<div class="a" style="left:940px;top:936px;width:339px;height:17px;background:#EEEEF2"></div>
<div class="a" style="left:940px;top:937px;width:17px;height:15px;background:#EEEEF2;border:1px solid #A9A294"></div>
<svg class="a" style="left:946px;top:940px;" width="5" height="8" viewBox="0 0 5 8"><path d="M5 0V8L0.5 4Z" fill="#000"/></svg>
<div class="a" style="left:957px;top:937px;width:167px;height:15px;background:#EEEEF2;border:1px solid #A9A294"></div>
<div class="a" style="left:1261px;top:937px;width:17px;height:15px;background:#EEEEF2;border:1px solid #A9A294"></div>
<svg class="a" style="left:1267px;top:940px;" width="5" height="8" viewBox="0 0 5 8"><path d="M0 0V8L4.5 4Z" fill="#000"/></svg>
<div class="a" style="left:25px;top:683px;width:507px;height:280px;border:5px solid #ED1C24"></div>
<div class="a" style="left:532px;top:954px;width:748px;height:5px;background:#F5F5F7"></div>
<div class="a" style="left:0px;top:959px;width:1280px;height:25px;background:#0078D4"></div>
<div class="a" style="left:25px;top:958px;width:507px;height:5px;background:#ED1C24"></div>
<svg class="a" style="left:1232px;top:963px;" width="21" height="19" viewBox="0 0 21 19"><path d="M1 1H19V14H9L6 18V14H1Z" fill="#EDEDED" stroke="#fff" stroke-width="1.5"/><path d="M2.5 2.5H17.5V12.5H2.5Z" fill="none" stroke="#6b6b6b" stroke-width="1.2"/></svg>
<svg class="a" style="left:1257px;top:966px;" width="8" height="11" viewBox="0 0 8 11"><path d="M3.6 1.2H5.6V10.2H3.6V3.6L1.2 4.6V2.7Z" fill="#fff"/></svg>
<div class="a" style="left:0px;top:984px;width:1280px;height:40px;background:#1F1F1F"></div>
<svg class="a" style="left:16px;top:996px;" width="16" height="16" viewBox="0 0 16 16"><path d="M0 2.2L6.5 1.3V7.5H0Z M7.5 1.1L16 0V7.5H7.5Z M0 8.5H6.5V14.7L0 13.8Z M7.5 8.5H16V16L7.5 14.9Z" fill="#fff"/></svg>
<div class="a" style="left:48px;top:984px;width:344px;height:40px;background:#F0F0F0"></div>
<svg class="a" style="left:60px;top:995px;" width="18" height="18" viewBox="0 0 18 18"><circle cx="11" cy="7" r="5.5" fill="none" stroke="#222" stroke-width="1.5"/><path d="M7 11L1 17" stroke="#222" stroke-width="1.7"/></svg>
<div class="t" style="left:88px;top:997.5px;font-size:14.6px;color:#333">Type here to search</div>
<svg class="a" style="left:407px;top:995px;" width="18" height="18" viewBox="0 0 18 18"><circle cx="9" cy="9" r="7" fill="none" stroke="#fff" stroke-width="2"/></svg>
<svg class="a" style="left:455px;top:995px;" width="18" height="18" viewBox="0 0 18 18"><rect x="1.5" y="4.5" width="11" height="9" fill="none" stroke="#fff" stroke-width="1.3"/><path d="M1 1.5H13M1 16.5H13M15.5 2V7M15.5 9V16" stroke="#fff" stroke-width="1.3"/></svg>
<svg class="a" style="left:500px;top:990px;" width="28" height="28" viewBox="0 0 28 28"><defs><linearGradient id="eg1" x1="0" y1="0" x2="1" y2="0.6"><stop offset="0" stop-color="#33BDF2"/><stop offset="0.5" stop-color="#2EC7C8"/><stop offset="1" stop-color="#62EC5E"/></linearGradient><linearGradient id="eg2" x1="0" y1="0" x2="0.3" y2="1"><stop offset="0" stop-color="#1E9BEA"/><stop offset="1" stop-color="#0A70D2"/></linearGradient></defs><circle cx="14" cy="14" r="12" fill="url(#eg1)"/><path d="M2 14A12 12 0 0 0 14 26C18.5 26 22.5 23.5 24.6 20.3C20 21.8 15.5 21 13 18.2C11 16 11.2 12.6 14.6 11.2C12.5 9 8.5 8.2 5.5 9.2C3.2 10.2 2 12 2 14Z" fill="url(#eg2)"/><path d="M11.4 12.8C9.8 16.6 11.5 22.4 16.5 23.6C20 24.3 23 22.2 24.6 20.3C20 21.8 15.5 21 13 18.2C11.8 16.8 11.3 14.8 11.4 12.8Z" fill="#0D57A6"/><ellipse cx="14.4" cy="14.6" rx="2.7" ry="2.6" fill="#1F1F1F"/><path d="M14.2 17.2C17 19.4 21 19.8 24.8 19.4" fill="none" stroke="#1F1F1F" stroke-width="1.3"/></svg>
<svg class="a" style="left:549px;top:993px;" width="24" height="21" viewBox="0 0 24 21"><path d="M1 1.5H10L12 3.5H22.6V19H1Z" fill="#E5A823"/><path d="M1 4.5H22.6V19H1Z" fill="#FCD56E"/><path d="M5 11.8H18.4V20H14.5V15.9H8.9V20H5Z" fill="#3D8FDC"/></svg>
<div class="a" style="left:542px;top:1022px;width:38px;height:2px;background:#76B9ED"></div>
<svg class="a" style="left:594px;top:991px;" width="28" height="25" viewBox="0 0 28 25"><path d="M2.5 6.5H25.5V22C25.5 23 24.8 23.7 23.8 23.7H4.2C3.2 23.7 2.5 23 2.5 22Z" fill="#fff"/><path d="M9.5 7V4.5C9.5 0.8 19.5 0.8 19.5 4.5V7" fill="none" stroke="#fff" stroke-width="1.4"/><rect x="8" y="9.9" width="5.3" height="5.1" fill="#F25022"/><rect x="14.2" y="9.9" width="5.1" height="5.1" fill="#7FBA00"/><rect x="8" y="15.9" width="5.3" height="5.1" fill="#00A4EF"/><rect x="14.2" y="15.9" width="5.1" height="5.1" fill="#FFB900"/></svg>
<svg class="a" style="left:641px;top:992px;" width="28" height="23" viewBox="0 0 28 23"><path d="M2 8L14 1.8L26 8V21.5H2Z" fill="#fff"/><path d="M3 8.2H24L13 11L20.7 17.3Z" fill="#1F1F1F"/></svg>
<svg class="a" style="left:689px;top:990px;" width="26" height="26" viewBox="0 0 26 26"><defs><radialGradient id="ff" cx="0.45" cy="0.6" r="0.65"><stop offset="0" stop-color="#FFBD30"/><stop offset="0.55" stop-color="#FF7A22"/><stop offset="1" stop-color="#E8245E"/></radialGradient><radialGradient id="fg" cx="0.4" cy="0.4" r="0.7"><stop offset="0" stop-color="#9C59E8"/><stop offset="1" stop-color="#5B2BB5"/></radialGradient></defs><path d="M16 1.5C17 4 19.5 5 21.5 7.5C24 10.5 24.5 14 24 16.5C23 21.5 18.5 25 13 25C7 25 2 20.5 2 14C2 11 3 9 4 7.5C4.5 9.5 5.5 10 6.5 10.5C7.5 7 11 5.5 13.5 5.2C15 4.5 16 3 16 1.5Z" fill="url(#ff)"/><circle cx="13" cy="14" r="5.4" fill="url(#fg)"/><path d="M6.5 10.5C8 9 11 8.5 13 9.5C10 9.8 8.5 11 8 13Z" fill="#FFB12A"/><path d="M18 9C20 10.5 20.5 13 19.5 15.5C20.5 12.5 19 10 16.5 9.2Z" fill="#FFDD3C"/></svg>
<svg class="a" style="left:737px;top:992px;" width="26" height="22" viewBox="0 0 26 22"><path d="M8 1L22 4V14L8 11Z" fill="#3FB4EE"/><path d="M2 16L14 19L24 17L12 14Z" fill="#D8D8D8"/></svg>
<svg class="a" style="left:786px;top:993px;" width="18" height="22" viewBox="0 0 18 22"><rect x="0" y="0" width="18" height="22" fill="#fff"/><rect x="2" y="2" width="14" height="4" fill="#1f1f1f"/><g fill="#1f1f1f"><rect x="3" y="9" width="3" height="2"/><rect x="8" y="9" width="3" height="2"/><rect x="13" y="9" width="3" height="2"/><rect x="3" y="13" width="3" height="2"/><rect x="8" y="13" width="3" height="2"/><rect x="13" y="13" width="3" height="2"/><rect x="3" y="17" width="3" height="2"/><rect x="8" y="17" width="3" height="2"/><rect x="13" y="17" width="3" height="2"/></g></svg>
<svg class="a" style="left:830px;top:991px;" width="25" height="24" viewBox="0 0 25 24"><path d="M17 1L24 4V20L17 23L6 13L17 16Z" fill="#A879E8"/><path d="M17 1L6 11L2 8L0 9V15L2 16L6 13L17 23Z" fill="#7A4FC4"/><path d="M17 7V17L11 12Z" fill="#1f1f1f"/></svg>
<div class="a" style="left:824px;top:1022px;width:38px;height:2px;background:#76B9ED"></div>
<div class="a" style="left:867px;top:984px;width:45px;height:40px;background:#3C3C3C"></div>
<svg class="a" style="left:876px;top:991px;" width="27" height="24" viewBox="0 0 27 24"><rect x="6" y="2" width="20" height="14" fill="#111"/><g fill="#555"><rect x="8" y="4" width="3" height="3"/><rect x="12" y="4" width="3" height="3"/><rect x="16" y="4" width="3" height="3"/><rect x="20" y="4" width="3" height="3"/><rect x="8" y="9" width="3" height="3"/><rect x="16" y="9" width="3" height="3"/><rect x="20" y="9" width="3" height="3"/></g><circle cx="11" cy="14" r="4.5" fill="#8AB8D8" stroke="#6a8aa8"/><path d="M8 17L2 23" stroke="#8a9aa8" stroke-width="2"/></svg>
<div class="a" style="left:867px;top:1022px;width:45px;height:2px;background:#76B9ED"></div>
<svg class="a" style="left:923px;top:991px;" width="26" height="26" viewBox="0 0 26 26"><circle cx="12" cy="12" r="7" fill="#3BC8D0"/><path d="M12 5V19M5 12H19M7 7L17 17M17 7L7 17" stroke="#1a4a6a" stroke-width="1"/><path d="M3 4L7 8M21 4L17 8M2 12H5M19 12H22M3 20L7 16" stroke="#ddd" stroke-width="1.2"/><path d="M16 16L23 23" stroke="#3a7ae0" stroke-width="3"/></svg>
<div class="a" style="left:917px;top:1022px;width:37px;height:2px;background:#76B9ED"></div>
<svg class="a" style="left:968px;top:993px;" width="23" height="20" viewBox="0 0 23 20"><rect x="0" y="0" width="23" height="20" fill="#F4F4F4"/><rect x="2" y="4" width="10" height="13" fill="#2E9A7A"/><rect x="14" y="5" width="6" height="2" fill="#aaa"/><rect x="14" y="9" width="6" height="2" fill="#aaa"/><rect x="14" y="13" width="6" height="2" fill="#aaa"/><rect x="20" y="4" width="1.5" height="8" fill="#3a8ad8"/></svg>
<div class="a" style="left:963px;top:1022px;width:37px;height:2px;background:#76B9ED"></div>
<svg class="a" style="left:1013px;top:998px;" width="12" height="8" viewBox="0 0 12 8"><path d="M1 7L6 2L11 7" fill="none" stroke="#fff" stroke-width="1.3"/></svg>
<svg class="a" style="left:1034px;top:995px;" width="18" height="16" viewBox="0 0 18 16"><path d="M2 4C2 1 14 1 14 4V12H2Z" fill="#ccc"/><path d="M2 9H14V13H2Z" fill="#888"/><path d="M9 9L16 16M16 9L9 16" stroke="#E02020" stroke-width="2"/></svg>
<svg class="a" style="left:1058px;top:996px;" width="18" height="14" viewBox="0 0 18 14"><path d="M3 12C0 12 0 7 3 7C3 3 9 2 11 5C14 4 17 7 15 10C17 11 16 12 14 12Z" fill="#777"/><path d="M1 1L16 14" stroke="#ddd" stroke-width="1.3"/></svg>
<svg class="a" style="left:1082px;top:996px;" width="18" height="16" viewBox="0 0 18 16"><rect x="4.5" y="1.5" width="12" height="9" fill="none" stroke="#fff" stroke-width="1.2"/><path d="M10.5 10.5V14M6 14.5H15M1.5 1V8M0 4H4" stroke="#fff" stroke-width="1.2"/></svg>
<svg class="a" style="left:1106px;top:995px;" width="18" height="16" viewBox="0 0 18 16"><path d="M1 6H4L8 2V14L4 10H1Z" fill="none" stroke="#fff" stroke-width="1.2"/><path d="M11 5C12.5 6.5 12.5 9.5 11 11M13.5 3C16 5.5 16 10.5 13.5 13" fill="none" stroke="#fff" stroke-width="1.2"/></svg>
<div class="t" style="left:1133px;top:994px;color:#fff;font-size:11.6px;line-height:18px">ENG</div>
<div class="t" style="left:1155px;top:989px;width:80px;text-align:center;color:#fff;font-size:12px;letter-spacing:-0.2px">10:47 AM</div>
<div class="t" style="left:1155px;top:1006px;width:80px;text-align:center;color:#fff;font-size:12px;letter-spacing:-0.3px">12/15/2025</div>
<svg class="a" style="left:1236px;top:992px;" width="32" height="30" viewBox="0 0 32 30"><path d="M2.8 3.8H19V17H9.5L6.8 20V17H2.8Z" fill="#fff"/><path d="M6 8H16M6 11H16M6 14H13" stroke="#1f1f1f" stroke-width="1.3"/><circle cx="18.6" cy="19.6" r="7.9" fill="#2B2B2B" stroke="#A0A0A0" stroke-width="1.1"/><text x="18.6" y="23.8" text-anchor="middle" font-size="11.5" fill="#fff" font-family="Liberation Sans">8</text></svg>
<div class="a" style="left:1275px;top:984px;width:1px;height:40px;background:#555"></div>
</body></html>
